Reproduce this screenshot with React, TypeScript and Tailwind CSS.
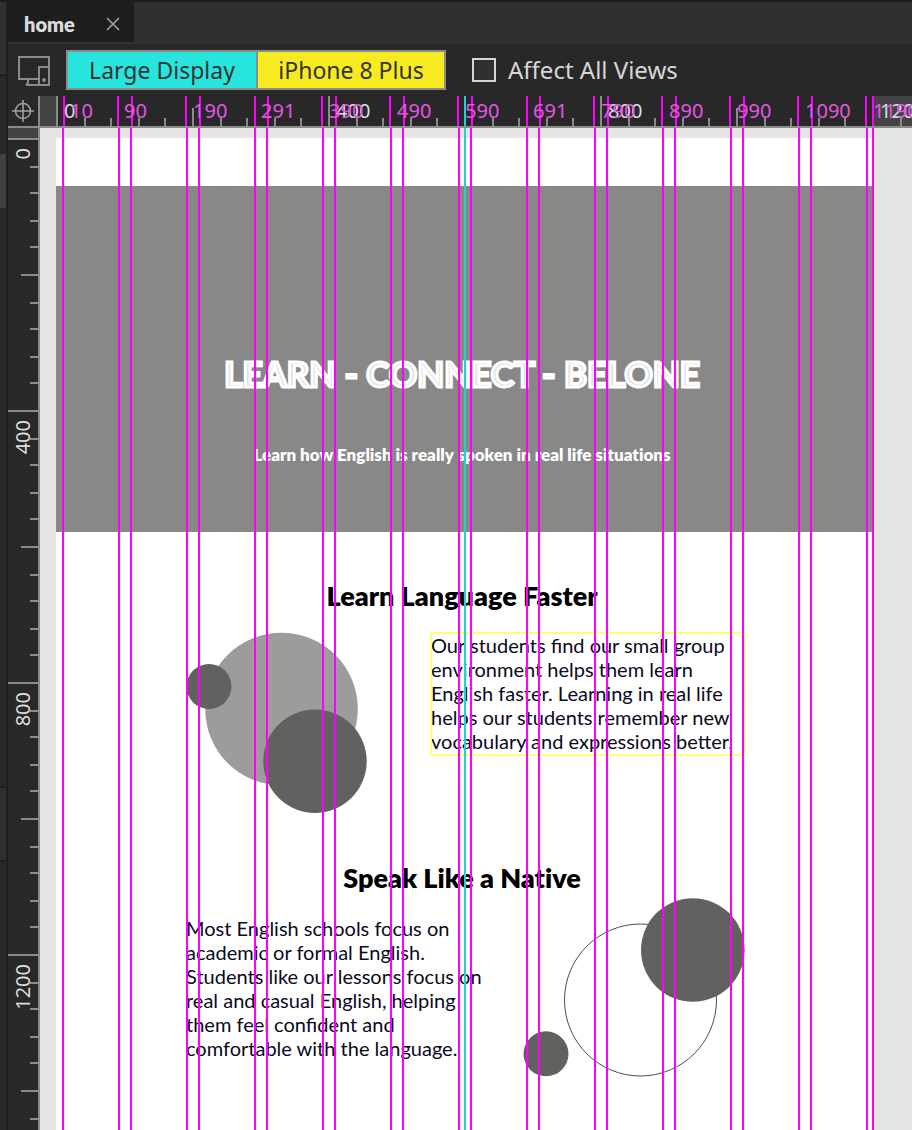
import React from "react";

const CANVAS_GUIDES = [
  6, 62, 74, 130, 142, 198, 210, 266, 278, 334, 346, 402, 414, 470, 482, 538,
  550, 606, 618, 674, 686, 742, 754, 810, 816,
];
const RULER_GUIDES = [
  23, 77, 91, 145, 159, 214, 227, 281, 295, 349, 363, 417, 431, 486, 499, 553,
  567, 621, 635, 689, 703, 757, 771, 825, 832,
];
const GUIDE_LABELS: [number, string][] = [
  [30, "10"], [84, "90"], [153, "190"], [221, "291"], [289, "390"],
  [357, "490"], [425, "590"], [493, "691"], [561, "790"], [629, "890"],
  [697, "990"], [765, "1090"], [833, "1190"],
];
const TICK_STEP = 27.2;

const tickAt = (start: number, n: number) =>
  Math.round((start + n * TICK_STEP) / 2) * 2;

function HorizontalRuler() {
  return (
    <div className="relative h-8 min-w-0 flex-1 overflow-hidden border-b-2 border-[#8b8b8b] bg-[#282828] text-xl leading-[30px] text-[#dcdcdc]">
      <div className="absolute inset-y-0 left-0 w-4 bg-[#444444]" />
      <div className="absolute inset-y-0 right-0 w-[38px] bg-[#444444]" />
      {Array.from({ length: 32 }, (_, n) => (
        <i
          key={n}
          className={`absolute bottom-0 w-0.5 bg-[#8b8b8b] ${n % 10 === 0 ? "h-[30px]" : n % 5 === 0 ? "h-[18px]" : "h-2"}`}
          style={{ left: tickAt(16, n) }}
        />
      ))}
      {RULER_GUIDES.map((x) => (
        <i key={x} className="absolute inset-y-0 w-0.5 bg-[#ff00ff]" style={{ left: x }} />
      ))}
      <i className="absolute inset-y-0 left-[424px] w-0.5 bg-[#25d0d0]" />
      {[0, 400, 800, 1200].map((v) => (
        <span key={v} className="absolute top-0" style={{ left: 24 + v * 0.68 }}>
          {v}
        </span>
      ))}
      {GUIDE_LABELS.map(([x, label]) => (
        <span key={label} className="absolute top-0 text-[#e455e4]" style={{ left: x }}>
          {label}
        </span>
      ))}
    </div>
  );
}

function VerticalRuler() {
  return (
    <div className="relative w-8 shrink-0 overflow-hidden border-r-2 border-[#8b8b8b] bg-[#282828] text-xl leading-[30px] text-[#dcdcdc]">
      <div className="absolute inset-x-0 top-0 h-2.5 bg-[#444444]" />
      {Array.from({ length: 60 }, (_, n) => (
        <i
          key={n}
          className={`absolute right-0 h-0.5 bg-[#8b8b8b] ${n % 10 === 0 ? "w-[30px]" : n % 5 === 0 ? "w-[17px]" : "w-2"}`}
          style={{ top: tickAt(10, n) }}
        />
      ))}
      {[0, 400, 800, 1200].map((v) => (
        <span
          key={v}
          className="absolute left-0 rotate-180 [writing-mode:vertical-rl]"
          style={{ top: 20 + v * 0.68 }}
        >
          {v}
        </span>
      ))}
    </div>
  );
}

function PageDesign() {
  return (
    <div className="flex-1 bg-white pt-12 font-[Lato,sans-serif] text-black">
      <section className="flex h-[346px] flex-col items-center bg-[#888888] pt-[163px] pr-1 text-white">
        <h1 className="text-[35px] leading-[48px] font-bold whitespace-nowrap text-[#dedede] [-webkit-text-stroke:3px_#fff]">
          LEARN - CONNECT - BELONE
        </h1>
        <p className="mt-[46px] text-[17px] leading-6 font-extrabold whitespace-nowrap [font-variant-ligatures:none]">
          Learn how English is really spoken in real life situations
        </p>
      </section>

      <section className="pt-[46px] pr-1">
        <h2 className="text-center text-[27px] leading-9 font-extrabold [font-variant-ligatures:none]">
          Learn Language Faster
        </h2>
        <div className="flex pt-[18px] pl-[131px]">
          <svg className="h-[182px] w-[180px] shrink-0" viewBox="0 0 180 182" aria-hidden="true">
            <circle cx="94.500" cy="77" r="76.300" fill="#9c9c9c" />
            <circle cx="22" cy="54.500" r="22.500" fill="#616161" />
            <circle cx="128" cy="129.200" r="51.700" fill="#616161" />
          </svg>
          <p className="ml-[63px] h-[124px] w-[316px] shrink-0 pt-px pl-px text-xl leading-6 text-[#0a0a1e] outline-2 -outline-offset-2 outline-[#ffff7a]">
            Our students find our small group environment helps them learn English faster.
            Learning in real life helps our students remember new vocabulary and expressions
            better.
          </p>
        </div>
      </section>

      <section className="pt-[46px] pr-1">
        <h2 className="text-center text-[27px] leading-9 font-extrabold [font-variant-ligatures:none]">
          Speak Like a Native
        </h2>
        <div className="flex pl-[130px]">
          <p className="w-[310px] shrink-0 pt-5 text-xl leading-6 text-[#0a0a1e]">
            Most English schools focus on academic or formal English. Students like our lessons
            focus on real and casual English, helping them feel confident and comfortable with
            the language.
          </p>
          <svg className="ml-[27px] h-[181px] w-[222px] shrink-0" viewBox="0 0 222 181" aria-hidden="true">
            <circle cx="117.500" cy="104" r="76" fill="none" stroke="#4a4a58" />
            <circle cx="169.800" cy="54" r="51.800" fill="#616161" />
            <circle cx="23" cy="157.800" r="22.500" fill="#616161" />
          </svg>
        </div>
      </section>
    </div>
  );
}

export default function App() {
  return (
    <div className="flex min-h-screen bg-[#282828] font-['Noto_Sans',sans-serif]">
      <div className="flex w-2 shrink-0 flex-col border-r-2 border-[#1e1e1e]">
        <div className="h-[76px] border-y-2 border-[#1e1e1e] bg-[#303030]" />
        <div className="h-[78px]" />
        <div className="h-[54px] bg-[#404040]" />
        <div className="h-[578px]" />
        <div className="h-[76px] border-y-2 border-[#1e1e1e] bg-[#303030]" />
      </div>

      <div className="flex min-w-0 flex-1 flex-col">
        <header className="border-t-2 border-b-2 border-t-[#1e1e1e] border-b-[#303030] bg-[#303030]">
          <div className="flex h-10 w-[126px] items-center justify-between bg-[#1e1e1e] pt-1 pr-[13px] pl-4">
            <span className="font-[Lato,sans-serif] text-[20px] leading-6 font-extrabold text-[#dcdcdc]">home</span>
            <button type="button" aria-label="Close home" className="text-[#a0a0a0]">
              <svg className="size-4" viewBox="0 0 16 16" stroke="currentColor" strokeWidth="1.600" fill="none">
                <path d="M2 2l12 12M14 2L2 14" />
              </svg>
            </button>
          </div>
        </header>

        <div className="flex h-[52px] items-center pl-2.5">
          <svg className="h-8 w-8 shrink-0" viewBox="0 0 32 32" fill="none" stroke="#8b8b8b" strokeWidth="2" aria-hidden="true">
            <path d="M20 25H1V3h30v28H8M31 13H21v18M10 25v4l-2 2" />
            <circle cx="26" cy="26" r="2" fill="#8b8b8b" stroke="none" />
          </svg>
          <div className="ml-4 flex h-10 border-2 border-[#8b8b8b] text-[23px] leading-[34px] text-[#333333]">
            <button type="button" className="w-[190px] border-r-2 border-[#8b8b8b] bg-[#27e5dd] whitespace-nowrap">
              Large Display
            </button>
            <button type="button" className="w-[186px] bg-[#f7ea20] whitespace-nowrap">
              iPhone 8 Plus
            </button>
          </div>
          <label className="ml-[26px] flex items-center gap-3 text-[24px] leading-9 whitespace-nowrap text-[#d6d6d6]">
            <input type="checkbox" className="size-6 appearance-none border-2 border-[#d6d6d6] bg-[#303030]" />
            Affect All Views
          </label>
        </div>

        <div className="flex">
          <div className="flex h-8 w-8 shrink-0 items-center justify-center border-r-2 border-b-2 border-[#8b8b8b]">
            <svg className="size-[22px]" viewBox="0 0 22 22" fill="none" stroke="#a0a0a0" strokeWidth="1.600" aria-hidden="true">
              <circle cx="11" cy="11" r="7.500" />
              <path d="M11 0v22M0 11h22" />
            </svg>
          </div>
          <HorizontalRuler />
        </div>

        <main className="flex min-h-0 flex-1">
          <VerticalRuler />
          <div className="relative flex min-w-0 flex-1 bg-[#e5e5e5] pt-2.5 pr-10 pl-4">
            <PageDesign />
            <div className="pointer-events-none absolute inset-y-0 left-4">
              {CANVAS_GUIDES.map((x) => (
                <i key={x} className="absolute inset-y-0 w-0.5 bg-[#ff00ff]" style={{ left: x }} />
              ))}
              <i className="absolute inset-y-0 left-[408px] w-0.5 bg-[#25d0d0]" />
            </div>
          </div>
        </main>
      </div>
    </div>
  );
}
